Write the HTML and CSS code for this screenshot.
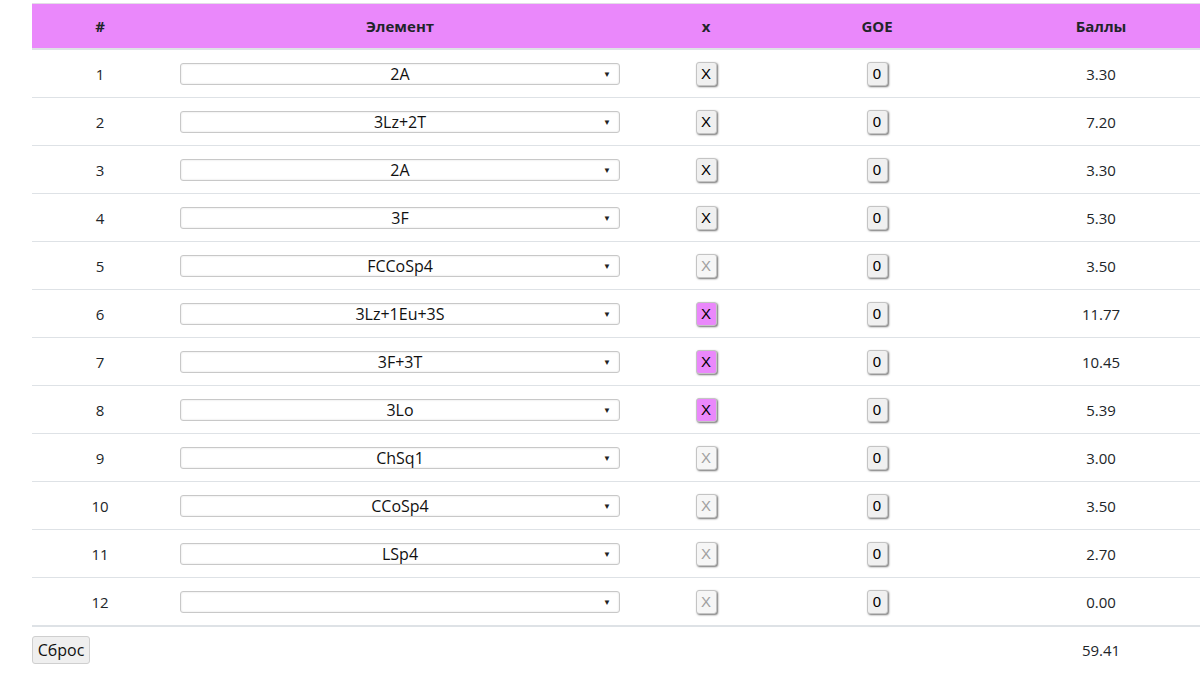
FILE: index.html
```html
<!DOCTYPE html>
<html lang="ru">
<head>
<meta charset="utf-8">
<link rel="stylesheet" href="styles.css">
</head>
<body>
<div class="page">
<table class="score">
  <colgroup>
    <col class="c-num"><col class="c-el"><col class="c-x"><col class="c-goe"><col class="c-pts">
  </colgroup>
  <thead>
    <tr><th>#</th><th>Элемент</th><th>x</th><th>GOE</th><th>Баллы</th></tr>
  </thead>
  <tbody>
    <tr><td>1</td><td><div class="sel"><span class="val">2A</span><span class="arr">▼</span></div></td><td><span class="btn">X</span></td><td><span class="btn">0</span></td><td>3.30</td></tr>
    <tr><td>2</td><td><div class="sel"><span class="val">3Lz+2T</span><span class="arr">▼</span></div></td><td><span class="btn">X</span></td><td><span class="btn">0</span></td><td>7.20</td></tr>
    <tr><td>3</td><td><div class="sel"><span class="val">2A</span><span class="arr">▼</span></div></td><td><span class="btn">X</span></td><td><span class="btn">0</span></td><td>3.30</td></tr>
    <tr><td>4</td><td><div class="sel"><span class="val">3F</span><span class="arr">▼</span></div></td><td><span class="btn">X</span></td><td><span class="btn">0</span></td><td>5.30</td></tr>
    <tr><td>5</td><td><div class="sel"><span class="val">FCCoSp4</span><span class="arr">▼</span></div></td><td><span class="btn off">X</span></td><td><span class="btn">0</span></td><td>3.50</td></tr>
    <tr><td>6</td><td><div class="sel"><span class="val">3Lz+1Eu+3S</span><span class="arr">▼</span></div></td><td><span class="btn on">X</span></td><td><span class="btn">0</span></td><td>11.77</td></tr>
    <tr><td>7</td><td><div class="sel"><span class="val">3F+3T</span><span class="arr">▼</span></div></td><td><span class="btn on">X</span></td><td><span class="btn">0</span></td><td>10.45</td></tr>
    <tr><td>8</td><td><div class="sel"><span class="val">3Lo</span><span class="arr">▼</span></div></td><td><span class="btn on">X</span></td><td><span class="btn">0</span></td><td>5.39</td></tr>
    <tr><td>9</td><td><div class="sel"><span class="val">ChSq1</span><span class="arr">▼</span></div></td><td><span class="btn off">X</span></td><td><span class="btn">0</span></td><td>3.00</td></tr>
    <tr><td>10</td><td><div class="sel"><span class="val">CCoSp4</span><span class="arr">▼</span></div></td><td><span class="btn off">X</span></td><td><span class="btn">0</span></td><td>3.50</td></tr>
    <tr><td>11</td><td><div class="sel"><span class="val">LSp4</span><span class="arr">▼</span></div></td><td><span class="btn off">X</span></td><td><span class="btn">0</span></td><td>2.70</td></tr>
    <tr class="last"><td>12</td><td><div class="sel"><span class="val"></span><span class="arr">▼</span></div></td><td><span class="btn off">X</span></td><td><span class="btn">0</span></td><td>0.00</td></tr>
  </tbody>
  <tfoot>
    <tr><td colspan="4" class="left"><span class="reset">Сброс</span></td><td>59.41</td></tr>
  </tfoot>
</table>
</div>
</body>
</html>
```

FILE: styles.css
```css
html, body {
  margin: 0;
  padding: 0;
  background: #fff;
  overflow: hidden;
}
body {
  font-family: "Open Sans", "Noto Sans", sans-serif;
  font-size: 15px;
  color: #212529;
}
.page {
  margin: 3px 0 0 32px;
  width: 1168px;
  overflow: hidden;
}
.score {
  border-collapse: collapse;
  width: 1196px;
  table-layout: fixed;
}
.c-num { width: 136px; }
.c-el { width: 464px; }
.c-x { width: 148px; }
.c-goe { width: 194px; }
.c-pts { width: 254px; }
.score th {
  background: #ea88fb;
  font-weight: 700;
  height: 44px;
  padding: 0 12px;
  text-align: center;
  vertical-align: middle;
  border-top: 1px solid #e3dde6;
  border-bottom: 2px solid #dee2e6;
  font-size: 15px;
}
.score tbody td {
  height: 47px;
  padding: 0 12px;
  text-align: center;
  vertical-align: middle;
  border-bottom: 1px solid #dee2e6;
}
.score tbody tr.last td {
  border-bottom: 2px solid #dee2e6;
}
.sel {
  position: relative;
  height: 20px;
  border: 1px solid #c8c8c8;
  border-radius: 3px;
  box-shadow: inset 0 0 2px rgba(0,0,0,0.15);
  background: #fff;
  display: flex;
  align-items: center;
  justify-content: center;
  font-size: 16px;
  line-height: 20px;
}
.sel .val {
  color: #111;
}
.sel .arr {
  position: absolute;
  right: 8px;
  top: 0;
  font-size: 8px;
  line-height: 20px;
  color: #222;
}
.btn {
  display: inline-flex;
  align-items: center;
  justify-content: center;
  width: 19px;
  height: 22px;
  border: 1px solid #c4c4c4;
  border-radius: 3px;
  background: #f0f0f0;
  box-shadow: 1px 1px 2px rgba(0,0,0,0.55);
  font-family: "Liberation Sans", Arial, sans-serif;
  font-size: 15px;
  color: #000;
  vertical-align: middle;
}
.btn.on {
  background: #ea88fb;
}
.btn.off {
  color: #a0a0a0;
  background: #f6f6f6;
}
.score tfoot td {
  height: 46px;
  padding: 0;
  text-align: center;
  vertical-align: middle;
}
.score tfoot td.left {
  text-align: left;
}
.reset {
  display: inline-flex;
  align-items: center;
  justify-content: center;
  width: 56px;
  height: 26px;
  border: 1px solid #cfcfcf;
  border-radius: 3px;
  background: #efefef;
  color: #111;
  font-size: 16px;
}
```
